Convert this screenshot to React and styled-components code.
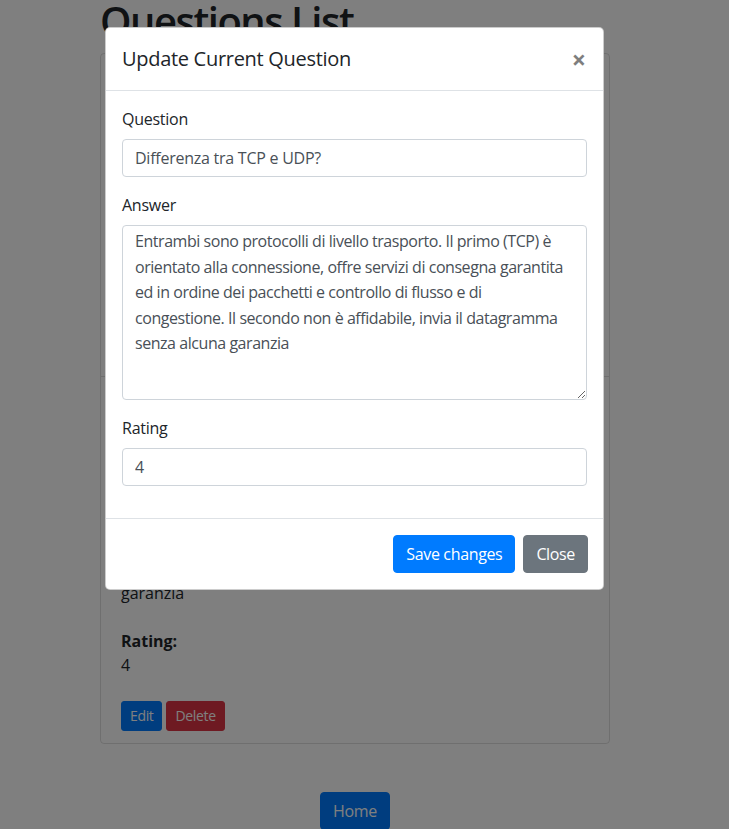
import React from 'react'
import styled, { createGlobalStyle } from 'styled-components'

const GlobalStyle = createGlobalStyle`
  html, body {
    margin: 0;
    padding: 0;
    background: #fff;
  }
  body {
    font-family: "Open Sans", "Noto Sans", sans-serif;
    font-size: 16px;
    line-height: 1.5;
    color: #212529;
  }
  * {
    box-sizing: border-box;
  }
`

const Viewport = styled.div`
  position: relative;
  height: 829px;
  overflow: hidden;
`

const Page = styled.div`
  width: 510px;
  margin-left: 100px;
  display: flex;
  flex-direction: column;
`

const Heading = styled.h1`
  margin: -3px 0 8px;
  font-size: 40px;
  font-weight: 600;
  line-height: 1.2;
  letter-spacing: -1.5px;
`

const Card = styled.div`
  border: 1px solid rgba(0, 0, 0, 0.125);
  border-radius: 4px;
  display: flex;
  flex-direction: column;
`

const CardSection = styled.div`
  padding: 20px 20px 12px;
  height: ${p => p.$height || 'auto'};
  border-top: ${p => (p.$divided ? '1px solid rgba(0, 0, 0, 0.125)' : 'none')};
`

const CardText = styled.p`
  margin: 0 0 16px;
`

const FieldTitle = styled.p`
  margin: 0;
  font-weight: 700;
`

const SmallButtons = styled.div`
  display: flex;
  gap: 4px;
  margin-top: 24px;
`

const Button = styled.button`
  font-family: inherit;
  font-size: ${p => (p.$small ? '14px' : '16px')};
  line-height: ${p => (p.$small ? '22px' : '24px')};
  padding: ${p => (p.$small ? '3px 8px' : '6px 12px')};
  border-radius: ${p => (p.$small ? '3px' : '4px')};
  border: 1px solid ${p => p.$color};
  background: ${p => p.$color};
  color: #fff;
  letter-spacing: -0.35px;
  cursor: pointer;
`

const HomeRow = styled.div`
  display: flex;
  justify-content: center;
  margin-top: 48px;
`

const Backdrop = styled.div`
  position: absolute;
  inset: 0;
  background: rgba(0, 0, 0, 0.5);
`

const Dialog = styled.div`
  position: absolute;
  top: 27px;
  left: 105px;
  width: 499px;
  background: #fff;
  border: 1px solid rgba(0, 0, 0, 0.2);
  border-radius: 5px;
  display: flex;
  flex-direction: column;
`

const DialogHeader = styled.div`
  display: flex;
  align-items: flex-start;
  justify-content: space-between;
  padding: 16px;
  border-bottom: 1px solid #dee2e6;
`

const DialogTitle = styled.h5`
  margin: 0;
  font-size: 20px;
  font-weight: 500;
  line-height: 1.5;
  letter-spacing: -0.3px;
`

const CloseX = styled.button`
  border: 0;
  background: transparent;
  padding: 0;
  margin: 0 1px 0 0;
  font-family: inherit;
  font-size: 25px;
  font-weight: 700;
  line-height: 30px;
  color: #000;
  opacity: 0.5;
`

const DialogBody = styled.div`
  padding: 16px;
`

const FormGroup = styled.div`
  margin-bottom: 16px;
`

const Label = styled.label`
  display: block;
  margin-bottom: 8px;
  line-height: 24px;
  letter-spacing: -0.25px;
`

const Input = styled.input`
  display: block;
  width: 100%;
  height: 38px;
  padding: 6px 12px;
  font-family: inherit;
  font-size: 16px;
  line-height: 1.5;
  color: #495057;
  background: #fff;
  border: 1px solid #ced4da;
  border-radius: 4px;
  letter-spacing: -0.25px;
`

const TextArea = styled.textarea`
  display: block;
  width: 100%;
  height: 175px;
  padding: 3px 12px 6px;
  font-family: inherit;
  font-size: 16px;
  line-height: 1.6;
  color: #495057;
  background: #fff;
  border: 1px solid #ced4da;
  border-radius: 4px;
  resize: vertical;
  letter-spacing: -0.45px;
`

const DialogFooter = styled.div`
  display: flex;
  justify-content: flex-end;
  align-items: center;
  gap: 8px;
  padding: 16px 15px 16px 16px;
  border-top: 1px solid #dee2e6;
`

const answer =
  'Entrambi sono protocolli di livello trasporto. Il primo (TCP) è orientato alla connessione, offre servizi di consegna garantita ed in ordine dei pacchetti e controllo di flusso e di congestione. Il secondo non è affidabile, invia il datagramma senza alcuna garanzia'

export default function App() {
  return (
    <>
      <GlobalStyle />
      <Viewport>
        <Page>
          <Heading>Questions List</Heading>
          <Card>
            <CardSection $height="322px" />
            <CardSection $divided>
              <CardText style={{ marginTop: 184 }}>garanzia</CardText>
              <FieldTitle style={{ marginTop: 24 }}>Rating:</FieldTitle>
              <CardText>4</CardText>
              <SmallButtons>
                <Button $small $color="#007bff">Edit</Button>
                <Button $small $color="#dc3545">Delete</Button>
              </SmallButtons>
            </CardSection>
          </Card>
          <HomeRow>
            <Button $color="#007bff">Home</Button>
          </HomeRow>
        </Page>
        <Backdrop />
        <Dialog>
          <DialogHeader>
            <DialogTitle>Update Current Question</DialogTitle>
            <CloseX aria-label="Close">×</CloseX>
          </DialogHeader>
          <DialogBody>
            <FormGroup>
              <Label>Question</Label>
              <Input defaultValue="Differenza tra TCP e UDP?" />
            </FormGroup>
            <FormGroup>
              <Label>Answer</Label>
              <TextArea defaultValue={answer} />
            </FormGroup>
            <FormGroup>
              <Label>Rating</Label>
              <Input defaultValue="4" />
            </FormGroup>
          </DialogBody>
          <DialogFooter>
            <Button $color="#007bff">Save changes</Button>
            <Button $color="#6c757d">Close</Button>
          </DialogFooter>
        </Dialog>
      </Viewport>
    </>
  )
}
